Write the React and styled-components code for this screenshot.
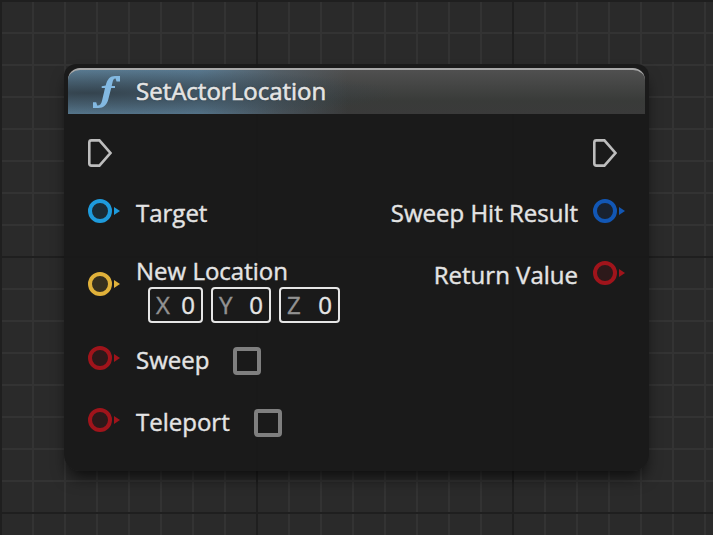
import React from "react";
import styled, { createGlobalStyle } from "styled-components";

const GlobalStyle = createGlobalStyle`
  body { margin: 0; background: #fff; overflow: hidden; }
  * { box-sizing: border-box; }
`;

const Canvas = styled.main`
  width: 713px;
  height: 535px;
  padding: 64px;
  overflow: hidden;
  font-family: "Open Sans", "Noto Sans", sans-serif;
  font-size: 24px;
  color: #e4e4e4;
  -webkit-text-stroke: 0.4px;
  background-color: #2a2a2a;
  background-image:
    linear-gradient(#1f1f1f 2px, transparent 2px),
    linear-gradient(90deg, #1f1f1f 2px, transparent 2px),
    linear-gradient(#333 2px, transparent 2px),
    linear-gradient(90deg, #333 2px, transparent 2px);
  background-size: 256px 256px, 256px 256px, 32px 32px, 32px 32px;
`;

const Node = styled.section`
  width: 585px;
  height: 407px;
  padding: 4px;
  border-radius: 12px 12px 16px 16px;
  background: rgba(25, 25, 25, 0.95);
  box-shadow: 0 10px 16px -4px rgba(0, 0, 0, 0.7);
`;

const Header = styled.header`
  display: flex;
  align-items: center;
  height: 46px;
  padding-left: 25px;
  border-top: 2px solid #a9a9a9;
  border-radius: 12px 12px 0 0;
  background:
    radial-gradient(ellipse 310px 25px at 20px 23px, rgba(50, 64, 74, 0.95), rgba(50, 64, 74, 0.55) 45%, rgba(50, 64, 74, 0) 100%),
    linear-gradient(90deg, #5c7f97 0, rgba(90, 125, 150, 0.9) 130px, rgba(88, 115, 135, 0.4) 210px, rgba(88, 123, 148, 0) 280px),
    linear-gradient(#505050, #393b39 70%, #3a3a3a);
`;

const FunctionIcon = styled.svg`
  width: 27px;
  height: 32px;
  margin-right: 16px;
  flex: none;
`;

const Label = styled.span`
  display: block;
  width: ${(p) => p.$width}px;
  line-height: 32px;
  white-space: nowrap;
  transform: translateY(${(p) => p.$shift || 0}px);
`;

const Title = styled(Label)`
  -webkit-text-stroke: 0.6px;
  text-shadow: 0 0 2px rgba(0, 0, 0, 0.4);
`;

const Body = styled.div`
  display: flex;
  justify-content: space-between;
  padding: 0 20px;
`;

const Column = styled.div`
  display: flex;
  flex-direction: column;
`;

const PinRow = styled.div`
  display: flex;
  align-items: center;
  justify-content: ${(p) => (p.$output ? "flex-end" : "flex-start")};
  height: 62px;
`;

const ExecRow = styled(PinRow)`
  height: 66px;
  align-items: flex-start;
  padding-top: 25px;
  padding-right: ${(p) => (p.$output ? 8 : 0)}px;
`;

const PinSvg = styled.svg`
  display: block;
  flex: none;
  width: 32px;
  height: 24px;
  margin-right: ${(p) => (p.$output ? 0 : 16)}px;
  margin-left: ${(p) => (p.$output ? 15 : 0)}px;
`;

const VectorRow = styled(PinRow)`
  height: 85px;
  align-items: flex-start;
  padding-top: 30px;
`;

const VectorField = styled.div`
  margin-top: -17px;
`;

const AxisGroup = styled.div`
  display: flex;
  gap: 8px;
  padding-left: 12px;
`;

const AxisBox = styled.div`
  display: flex;
  align-items: center;
  justify-content: space-between;
  width: ${(p) => p.$width}px;
  height: 36px;
  padding: 0 6px;
  border: 2px solid #e6e6e6;
  border-radius: 4px;
  line-height: 32px;
`;

const AxisName = styled.span`
  color: #929292;
`;

const CheckBox = styled.span`
  width: 28px;
  height: 28px;
  margin: 6px 0 0 24px;
  border: 4px solid #7f7f7f;
  border-radius: 4px;
`;

const ExecPin = () => (
  <svg width="24" height="28" viewBox="0 0 24 28">
    <path d="M3.4 1.4H11.4L22.4 14L11.4 26.6H3.4Q1.3 26.6 1.3 24.5V3.5Q1.3 1.4 3.4 1.4Z" fill="none" stroke="#bdbdbd" strokeWidth="2.6" />
  </svg>
);

const Pin = ({ color, output }) => (
  <PinSvg $output={output} viewBox="0 0 32 24">
    <circle cx="12" cy="12" r="10" fill={color} fillOpacity="0.14" stroke={color} strokeWidth="4" />
    <path d="M26 8L32 12L26 16Z" fill={color} />
  </PinSvg>
);

const Axis = ({ name, width }) => (
  <AxisBox $width={width}>
    <AxisName>{name}</AxisName>
    <span>0</span>
  </AxisBox>
);

export default function App() {
  return (
    <>
      <GlobalStyle />
      <Canvas>
        <Node>
          <Header>
            <FunctionIcon viewBox="0 0 27 32">
              <path
                fill="#83b9e2"
                d="M27 0V5.5H23.5L22.6 2.4C20.8 2.2 20.1 3.7 19.6 6L18.7 10H22V12H18.2L15.4 23C13.8 29.2 10.6 32 5.4 32H0V26.2H3.2L4.2 29.6C7 29.8 8.3 28 9.2 24L12 12H8.7V10.3L12.7 9.5C14.2 3 17.2 0 22 0Z"
              />
            </FunctionIcon>
            <Title $shift={-1}>SetActorLocation</Title>
          </Header>
          <Body>
            <Column>
              <ExecRow><ExecPin /></ExecRow>
              <PinRow>
                <Pin color="#1e9bdc" />
                <Label $shift={2}>Target</Label>
              </PinRow>
              <VectorRow>
                <Pin color="#e0b13a" />
                <VectorField>
                  <Label>New Location</Label>
                  <AxisGroup>
                    <Axis name="X" width={55} />
                    <Axis name="Y" width={60} />
                    <Axis name="Z" width={61} />
                  </AxisGroup>
                </VectorField>
              </VectorRow>
              <PinRow>
                <Pin color="#a0141b" />
                <Label $shift={2} $width={73}>Sweep</Label>
                <CheckBox />
              </PinRow>
              <PinRow>
                <Pin color="#a0141b" />
                <Label $shift={2} $width={94}>Teleport</Label>
                <CheckBox />
              </PinRow>
            </Column>
            <Column>
              <ExecRow $output><ExecPin /></ExecRow>
              <PinRow $output>
                <Label $shift={2}>Sweep Hit Result</Label>
                <Pin output color="#1257b5" />
              </PinRow>
              <PinRow $output>
                <Label $shift={2}>Return Value</Label>
                <Pin output color="#a0141b" />
              </PinRow>
            </Column>
          </Body>
        </Node>
      </Canvas>
    </>
  );
}
